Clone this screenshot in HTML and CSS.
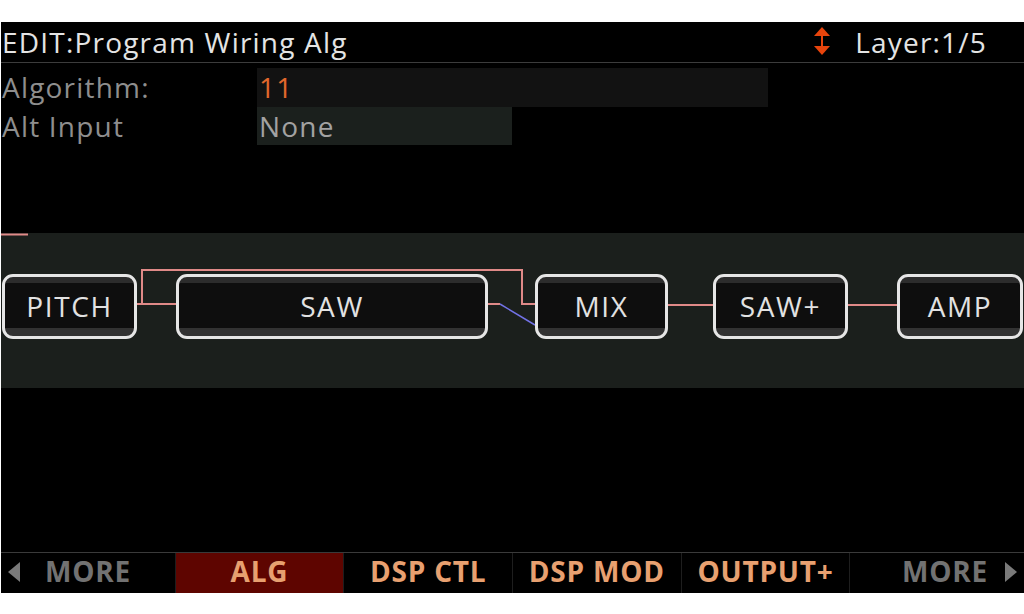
FILE: index.html
```html
<!DOCTYPE html>
<html lang="en">
<head>
  <meta charset="UTF-8">
  <title>EDIT:Program Wiring Alg</title>
  <link rel="stylesheet" href="styles.css">
</head>
<body>

  <div class="screen">

    <!-- title bar -->
    <div class="titlebar">
      <span class="title">EDIT:Program Wiring Alg</span>
      <span class="layer">
        <svg class="updown" width="18" height="32" viewBox="0 0 18 32">
          <path d="M9 3 V29" stroke="#e8440c" stroke-width="2"/>
          <path d="M1 11 L9 2 L17 11 Z" fill="#e8440c"/>
          <path d="M1 21 L9 30 L17 21 Z" fill="#e8440c"/>
        </svg>
        Layer:1/5
      </span>
    </div>

    <!-- parameters -->
    <div class="params">
      <div class="param">
        <div class="label">Algorithm:</div>
        <div class="value value-alg">11</div>
      </div>
      <div class="param">
        <div class="label">Alt Input</div>
        <div class="value value-alt">None</div>
      </div>
    </div>

    <!-- wiring diagram -->
    <div class="wiring">
      <svg class="wires" width="1023" height="155" viewBox="0 0 1023 155">
        <g stroke="#e08a88" stroke-width="2" fill="none">
          <path d="M0 1.5 H27"/>
          <path d="M136 71 H175"/>
          <path d="M141 71 V37 H521 V71 H534"/>
          <path d="M487 71 H499"/>
          <path d="M667 72 H712"/>
          <path d="M847 72 H896"/>
        </g>
        <path d="M499 71 L534 92" stroke="#7272e6" stroke-width="1.5"/>
      </svg>
      <div class="nodes">
        <div class="node node-pitch">PITCH</div>
        <div class="node node-saw">SAW</div>
        <div class="node node-mix">MIX</div>
        <div class="node node-sawplus">SAW+</div>
        <div class="node node-amp">AMP</div>
      </div>
    </div>

    <div class="spacer"></div>

    <!-- soft buttons -->
    <div class="tabs">
      <div class="tab tab-more">
        <svg width="14" height="22" viewBox="0 0 14 22"><path d="M13 1 V21 L1 11 Z" fill="#7a7a7a"/></svg>
        <span>MORE</span>
      </div>
      <div class="tab active">ALG</div>
      <div class="tab">DSP CTL</div>
      <div class="tab">DSP MOD</div>
      <div class="tab">OUTPUT+</div>
      <div class="tab tab-more tab-more-right">
        <span>MORE</span>
        <svg width="14" height="22" viewBox="0 0 14 22"><path d="M1 1 V21 L13 11 Z" fill="#7a7a7a"/></svg>
      </div>
    </div>

  </div>

</body>
</html>
```

FILE: styles.css
```css
body {
  margin: 0;
  background: #fff;
  font-family: 'Open Sans', 'Noto Sans', sans-serif;
}

.screen {
  margin: 22px 0 0 1px;
  width: 1023px;
  height: 571px;
  background: #000;
  display: flex;
  flex-direction: column;
  overflow: hidden;
  letter-spacing: 1.2px;
}

.titlebar {
  height: 40px;
  line-height: 40px;
  font-size: 28px;
  color: #e4e4e4;
  border-bottom: 1px solid #3c3c3c;
  display: flex;
  justify-content: space-between;
  padding-left: 1px;
}

.layer {
  display: flex;
  align-items: center;
  padding-right: 37px;
}

.updown {
  margin-right: 24px;
  margin-top: -2px;
}

.params {
  padding-top: 5px;
}

.param {
  display: flex;
  font-size: 28px;
}

.param:first-child {
  height: 39px;
  line-height: 39px;
}

.param:last-child {
  height: 38px;
  line-height: 38px;
}

.label {
  width: 255px;
  color: #8e8e8e;
  padding-left: 1px;
}

.value {
  padding-left: 2px;
}

.value-alg {
  width: 509px;
  background: #121212;
  color: #e2682c;
}

.value-alt {
  width: 253px;
  background: #1b201d;
  color: #a2a2a2;
}

.wiring {
  position: relative;
  margin-top: 88px;
  height: 155px;
  background: #1b1f1c;
}

.wires {
  position: absolute;
  left: 0;
  top: 0;
}

.nodes {
  position: relative;
  display: flex;
  padding-top: 41px;
  padding-left: 1px;
}

.node {
  box-sizing: border-box;
  height: 65px;
  border: 3px solid #e6e6e6;
  border-radius: 11px;
  background: linear-gradient(#2c2c2c 0, #2c2c2c 6px, #0e0e0e 6px, #0e0e0e calc(100% - 8px), #323232 calc(100% - 8px));
  color: #e2e2e2;
  font-size: 28px;
  letter-spacing: 1.6px;
  line-height: 58px;
  text-align: center;
}

.node-pitch { width: 135px; }
.node-saw { width: 312px; margin-left: 39px; }
.node-mix { width: 133px; margin-left: 47px; }
.node-sawplus { width: 135px; margin-left: 45px; }
.node-amp { width: 126px; margin-left: 49px; }

.spacer {
  flex: 1;
}

.tabs {
  height: 40px;
  border-top: 1px solid #3a3a3a;
  display: flex;
}

.tab {
  flex: 1;
  text-align: center;
  font-size: 28px;
  font-weight: bold;
  line-height: 36px;
  letter-spacing: 0.8px;
  color: #e8a070;
  border-left: 1px solid #1e1e1e;
}

.tab:first-child {
  border-left: none;
}

.tab.active {
  background: #5e0500;
}

.tab-more {
  color: #727272;
  display: flex;
  align-items: flex-start;
  gap: 24px;
  padding-left: 6px;
}

.tab-more svg {
  margin-top: 8px;
}

.tab-more-right {
  justify-content: flex-end;
  padding-left: 0;
  padding-right: 6px;
  gap: 16px;
}
```
